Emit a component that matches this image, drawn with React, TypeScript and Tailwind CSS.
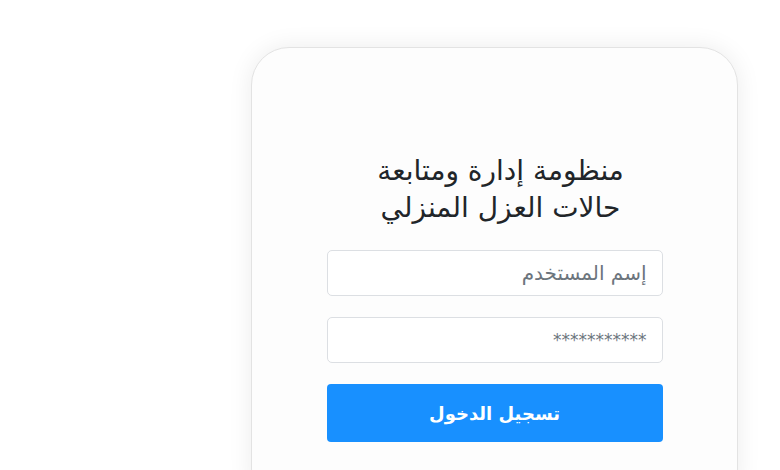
export default function App() {
  return (
    <div
      dir="rtl"
      className="h-[470px] bg-white flex justify-start pr-[42px] pt-[47px] overflow-hidden"
      style={{ fontFamily: '"DejaVu Sans", sans-serif' }}
    >
      <div className="w-[487px] h-[460px] shrink-0 rounded-[38px] border border-[#e3e3e3] bg-[#fdfdfd] shadow-[0_0_24px_rgba(0,0,0,0.08)] flex flex-col items-center pt-[104px]">
        <h1 className="text-[28px] leading-[37px] text-[#212529] text-center font-normal pl-[12px]">
          منظومة إدارة ومتابعة
          <br />
          حالات العزل المنزلي
        </h1>

        <form className="w-[336px] mt-[24px] flex flex-col">
          <input
            type="text"
            placeholder="إسم المستخدم"
            className="h-[46px] w-full rounded-[5px] border border-[#dcdfe3] bg-white px-[15px] text-[20px] text-[#495057] placeholder:text-[#6c757d] outline-none"
          />
          <input
            type="password"
            placeholder="***********"
            className="h-[46px] w-full mt-[21px] rounded-[5px] border border-[#dcdfe3] bg-white px-[15px] text-[17px] text-[#495057] placeholder:text-[#6c757d] outline-none"
          />
          <button
            type="button"
            className="h-[58px] w-full mt-[21px] rounded-[4px] bg-[#1890ff] text-white text-[18px] font-bold"
          >
            تسجيل الدخول
          </button>
        </form>
      </div>
    </div>
  );
}
